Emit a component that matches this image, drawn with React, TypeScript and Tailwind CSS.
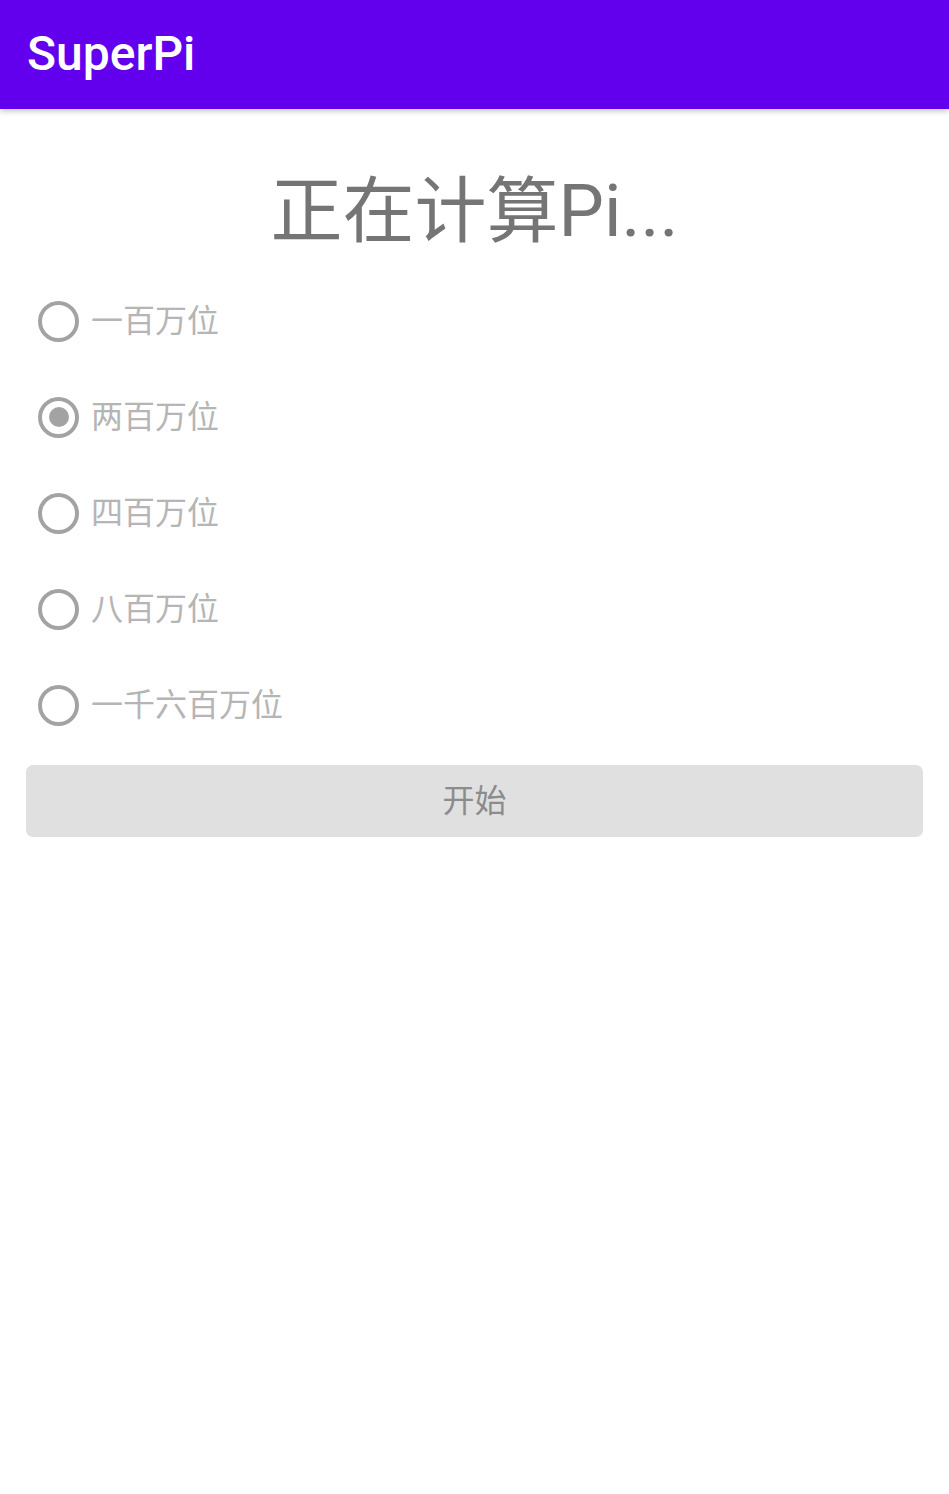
const options = ["一百万位", "两百万位", "四百万位", "八百万位", "一千六百万位"];

const font = { fontFamily: "Roboto, 'Noto Sans CJK SC', sans-serif" };

const Radio = ({ label, checked }: { label: string; checked: boolean }) => (
  <div className="flex items-center h-[96px] pl-[12px]">
    <span className="flex items-center justify-center w-[41px] h-[41px] rounded-full border-[4px] border-[#a3a3a3]">
      {checked && <span className="w-[20px] h-[20px] rounded-full bg-[#a3a3a3]" />}
    </span>
    <span className="ml-[12px] text-[32px] leading-none text-[#b5b5b5]">{label}</span>
  </div>
);

const App = () => {
  return (
    <div className="min-h-[1494px] bg-white" style={font}>
      <div className="h-[109px] bg-[#6200ee] flex items-center px-[27px] shadow-[0_2px_6px_rgba(0,0,0,0.25)] relative">
        <h1 className="text-[48px] font-medium text-white leading-none -mt-[2px]">SuperPi</h1>
      </div>
      <div className="px-[26px]">
        <p className="text-center text-[72px] leading-none text-[#757575] mt-[67px] mb-[25px]">正在计算Pi...</p>
        <div className="flex flex-col">
          {options.map((o, i) => (
            <Radio key={o} label={o} checked={i === 1} />
          ))}
        </div>
        <button className="mt-[12px] w-full h-[72px] rounded-[7px] bg-[#e0e0e0] text-[32px] text-[#8c8c8c]">
          开始
        </button>
      </div>
    </div>
  );
};

export default App;
